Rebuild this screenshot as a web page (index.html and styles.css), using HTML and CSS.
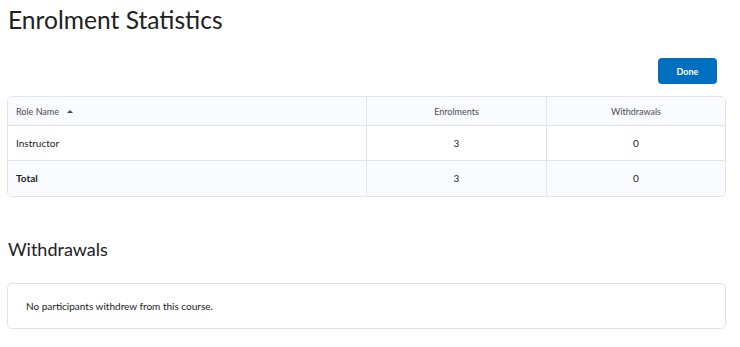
FILE: index.html
```html
<!DOCTYPE html>
<html lang="en">

<head>
    <meta charset="utf-8">
    <meta name="viewport" content="width=device-width, initial-scale=1.0">
    <title>Enrolment Statistics</title>
    <link rel="stylesheet" href="styles.css">
</head>

<body>
    <h1>Enrolment Statistics</h1>

    <div class="knapper">
        <button class="done">Done</button>
    </div>

    <div class="tabel_wrap">
        <table class="tabel">
            <thead>
                <tr>
                    <th class="rolle">Role Name <span class="pil"></span></th>
                    <th>Enrolments</th>
                    <th>Withdrawals</th>
                </tr>
            </thead>
            <tbody>
                <tr>
                    <td class="rolle">Instructor</td>
                    <td>3</td>
                    <td>0</td>
                </tr>
                <tr class="total">
                    <td class="rolle">Total</td>
                    <td>3</td>
                    <td>0</td>
                </tr>
            </tbody>
        </table>
    </div>

    <h2>Withdrawals</h2>

    <div class="boks">
        <p>No participants withdrew from this course.</p>
    </div>
</body>

</html>
```

FILE: styles.css
```css
body {
    margin: 0;
    padding: 0 14px 0 7px;
    font-family: Lato, "Open Sans", sans-serif;
    color: #202122;
    background-color: white;
}

h1 {
    font-size: 24.6px;
    font-weight: 400;
    line-height: 30px;
    margin: 5px 0 0 1px;
}

.knapper {
    display: flex;
    justify-content: flex-end;
    margin: 23px 9px 12px 0;
}

.done {
    font-family: Lato, sans-serif;
    font-size: 9px;
    font-weight: 700;
    color: white;
    background-color: #006fbf;
    border: none;
    border-radius: 4px;
    width: 59px;
    height: 26px;
    padding: 0;
}

.tabel_wrap {
    border: 1px solid #dfe3ea;
    border-radius: 5px;
    overflow: hidden;
}

.tabel {
    width: 100%;
    border-collapse: collapse;
    font-size: 10px;
}

.tabel th {
    font-size: 9px;
    font-weight: 400;
    color: #494c4e;
    background-color: #f9fbff;
    height: 28px;
    padding: 0;
    border-bottom: 1px solid #dfe3ea;
    border-left: 1px solid #dfe3ea;
}

.tabel td {
    height: 33px;
    padding: 0 0 1px;
    text-align: center;
    border-bottom: 1px solid #dfe3ea;
    border-left: 1px solid #dfe3ea;
}

.tabel tr:last-child td {
    border-bottom: none;
    height: 33px;
    padding-bottom: 2px;
}

.tabel .rolle {
    border-left: none;
    text-align: left;
    padding-left: 8px;
    width: 350px;
}

.tabel th:nth-child(2) {
    width: 179px;
}

.pil {
    display: inline-block;
    width: 0;
    height: 0;
    border-left: 3px solid transparent;
    border-right: 3px solid transparent;
    border-bottom: 3px solid #494c4e;
    margin: 0 0 1px 6px;
    vertical-align: middle;
}

.total td {
    background-color: #f9fbff;
}

.total .rolle {
    font-weight: 700;
}

h2 {
    font-size: 18px;
    font-weight: 400;
    line-height: 22px;
    margin: 41px 0 0 1px;
}

.boks {
    border: 1px solid #dfe3ea;
    border-radius: 5px;
    margin-top: 23px;
    height: 44px;
    display: flex;
    align-items: center;
}

.boks p {
    font-size: 10px;
    margin: 0 0 0 18px;
}
```
